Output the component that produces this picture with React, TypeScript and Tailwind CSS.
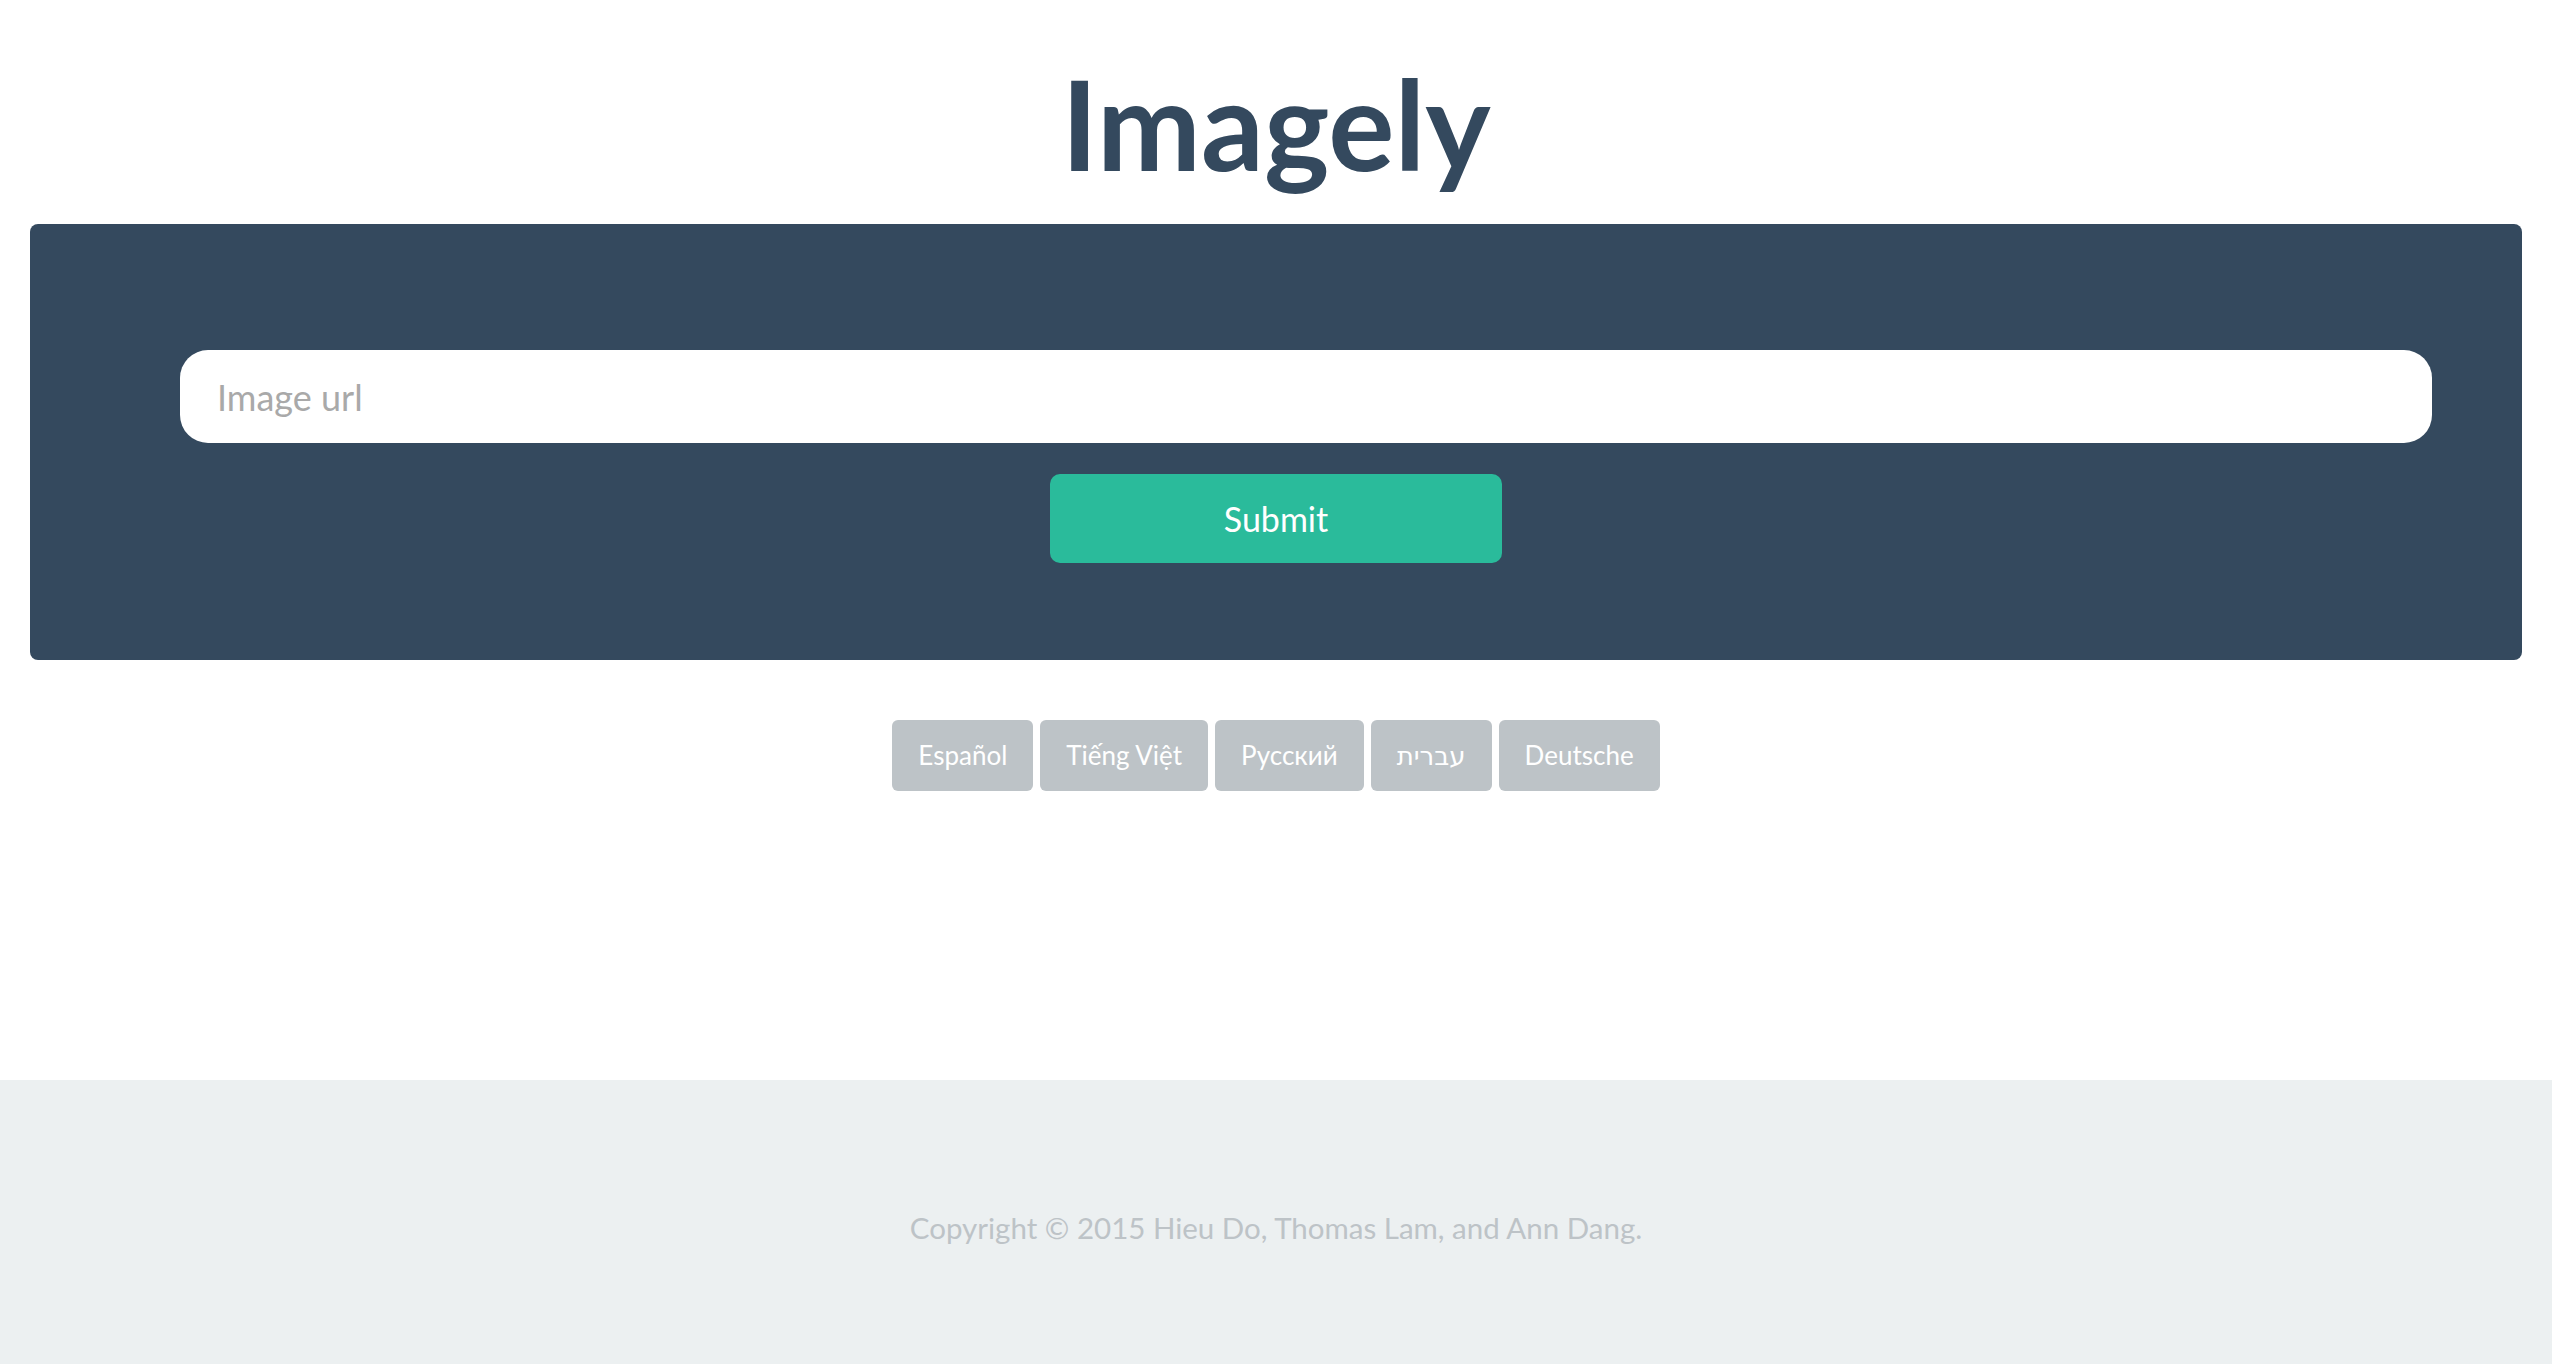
const languages = ['Español', 'Tiếng Việt', 'Русский', 'עברית', 'Deutsche'];

export default function App() {
  return (
    <div className="min-h-screen bg-white font-['Lato','DejaVu_Sans',sans-serif] flex flex-col">
      {/* 타이틀 */}
      <h1 className="text-center text-[124px] leading-[149px] font-bold text-[#34495e] pt-[49px] pb-[26px]">
        Imagely
      </h1>

      {/* URL 입력 패널 */}
      <div className="mx-[30px] rounded-[8px] bg-[#34495e] pt-[126px] pb-[97px] flex flex-col">
        <input
          type="text"
          placeholder="Image url"
          className="ml-[150px] mr-[90px] h-[93px] rounded-[28px] bg-white pl-[37px] pr-[37px] text-[36px] text-[#34495e] placeholder:text-[#a9a9a9] outline-none"
        />
        <button className="mt-[31px] mx-auto w-[452px] h-[89px] rounded-[10px] bg-[#2abb9b] text-white text-[34px]">
          Submit
        </button>
      </div>

      {/* 언어 선택 */}
      <div className="mt-[60px] flex justify-center gap-[7px]">
        {languages.map(lang => (
          <button
            key={lang}
            className="h-[71px] px-[26px] rounded-[6px] bg-[#bdc3c7] text-white text-[26px]"
          >
            {lang}
          </button>
        ))}
      </div>

      {/* 푸터 */}
      <footer className="mt-auto h-[284px] bg-[#ecf0f1] pt-[130px]">
        <p className="text-center text-[29.5px] leading-[36px] text-[#bdc3c7]">
          Copyright © 2015 Hieu Do, Thomas Lam, and Ann Dang.
        </p>
      </footer>
    </div>
  );
}
